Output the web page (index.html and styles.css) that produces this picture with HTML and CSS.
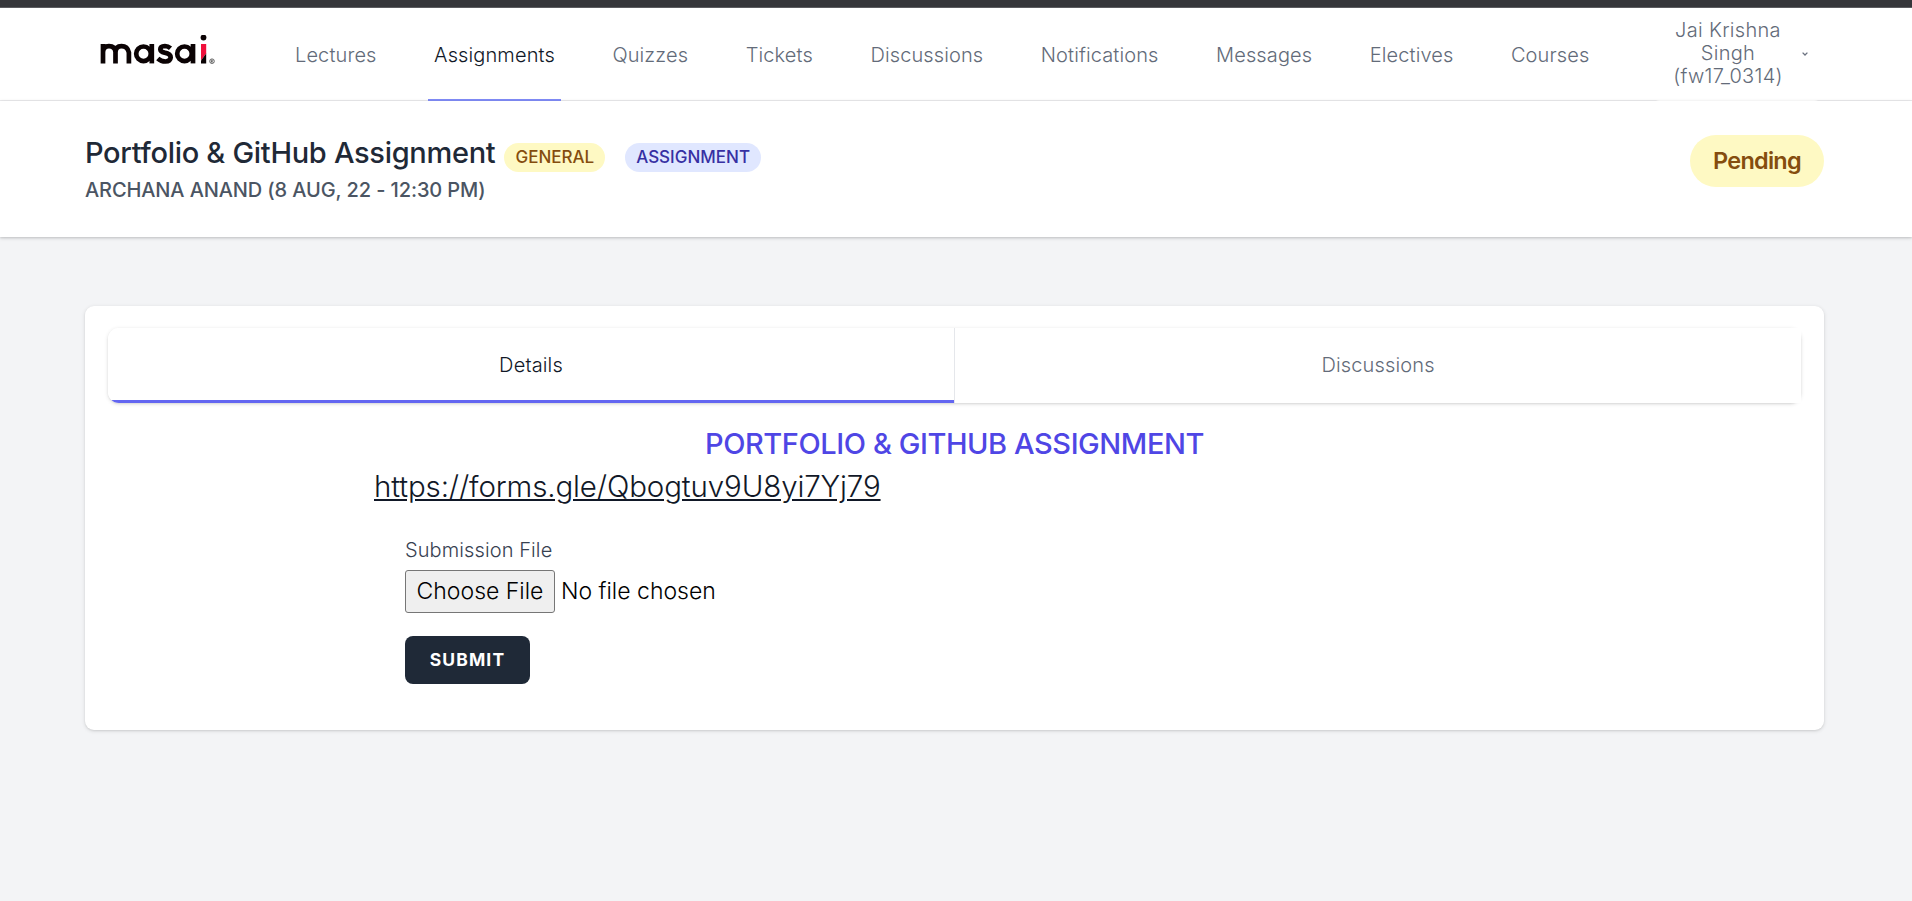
FILE: index.html
```
<!DOCTYPE html>
<html lang="en">
<head>
<meta charset="utf-8">
<title>Portfolio &amp; GitHub Assignment</title>
<link rel="stylesheet" href="styles.css">
</head>
<body>
<div class="topbar"></div>
<nav class="nav">
  <svg class="logo" viewBox="0 0 118 32" role="img" aria-label="masai">
    <g fill="none" stroke="#0b0304" stroke-width="4.7">
      <path d="M3 28.400V9M3 28V17.500Q3 11.200 9 11.200T15.500 17V28.400M15.500 17.500Q15.500 11.200 21.500 11.200T28.900 17.500V28.400"/>
      <circle cx="43.500" cy="18.800" r="7.300"/>
      <path d="M51.800 9V28.400"/>
      <path d="M70.500 13.200Q68 11 65 11Q60.300 11.200 60.300 14.200Q60.500 16.800 64.500 17.600Q70.700 18.600 70.700 22.600Q70.300 26.500 65.500 26.500Q61 26.500 57.800 23.500"/>
      <circle cx="84.500" cy="18.800" r="7.300"/>
      <path d="M93 9V28.400"/>
    </g>
    <circle cx="103.500" cy="2.500" r="2.900" fill="#0b0304"/>
    <path d="M101 9H106.200V18.500L101 25.500Z" fill="#f0103c"/>
    <path d="M106.200 18.500V28.400H101V25.500Z" fill="#0b0304"/>
    <circle cx="112" cy="26.200" r="2.300" fill="none" stroke="#444" stroke-width=".8"/>
    <path d="M111.300 27.700V25H112.300Q113.300 25.800 112.300 26.500H111.300M112.200 26.500L113 27.700" fill="none" stroke="#333" stroke-width=".6"/>
  </svg>
  <div class="links">
    <a>Lectures</a><a class="active">Assignments</a><a>Quizzes</a><a>Tickets</a><a>Discussions</a><a>Notifications</a><a>Messages</a><a>Electives</a><a>Courses</a>
  </div>
  <button class="user"><span>Jai Krishna<br>Singh<br>(fw17_0314)</span>
    <svg class="chevron" viewBox="0 0 6 4"><path d="M.6.6L3 3L5.400.6" fill="none" stroke="#6b7280" stroke-width="1.300"/></svg>
  </button>
</nav>
<header class="heading">
  <div>
    <div class="title-row"><h1>Portfolio &amp; GitHub Assignment</h1><span class="tag yellow">GENERAL</span><span class="tag indigo">ASSIGNMENT</span></div>
    <p class="author">ARCHANA ANAND (8 AUG, 22 - 12:30 PM)</p>
  </div>
  <span class="status">Pending</span>
</header>
<main class="card">
  <div class="tabs"><a class="tab current">Details</a><a class="tab">Discussions</a></div>
  <h2>PORTFOLIO &amp; GITHUB ASSIGNMENT</h2>
  <div class="content"><a class="form-link">https://forms.gle/Qbogtuv9U8yi7Yj79</a></div>
  <form class="form">
    <label class="label">Submission File</label>
    <div class="file"><button type="button" class="choose">Choose File</button><span>No file chosen</span></div>
    <button type="button" class="submit">SUBMIT</button>
  </form>
</main>
</body>
</html>
```
FILE: styles.css
```
* { box-sizing: border-box; }
body { margin: 0; background: #f3f4f6; font-family: Inter, "Liberation Sans", sans-serif; font-weight: 300; color: #111827; height: 901px; overflow: hidden; }
button { font: inherit; letter-spacing: inherit; }
h1, h2, p { margin: 0; }
.topbar { height: 8px; background: #35363a; border-bottom: 1px solid #5b5c60; }
.nav { height: 93px; background: #fff; border-bottom: 1px solid #ececee; display: flex; padding-left: 100px; letter-spacing: .12px; }
.logo { width: 118px; height: 32px; margin-top: 26.500px; flex: none; }
.links { display: flex; gap: 45.500px; margin-left: 71px; height: 93px; flex: none; }
.links a { padding: 0 6px; font-size: 20px; line-height: 94px; height: 93px; color: #636b79; }
.links a.active { color: #111827; border-bottom: 2px solid #818cf8; }
.user { margin-left: auto; margin-right: 90px; width: 170px; height: 93px; flex: none; border: 0; border-radius: 8px; background: #fff; color: #636b79; font-size: 20px; line-height: 23px; padding: 0 14px 2px 20px; display: flex; justify-content: space-between; align-items: center; }
.user span { width: 112px; text-align: center; letter-spacing: .3px; }
.chevron { width: 6px; height: 4px; }
.heading { height: 136px; background: #fff; position: relative; box-shadow: 0 1px 4px rgba(0,0,0,.15), 0 1px 2px rgba(0,0,0,.1); display: flex; justify-content: space-between; padding: 34px 88px 0 85px; }
.title-row { display: flex; align-items: flex-start; }
h1 { font-size: 29px; line-height: 36px; font-weight: 500; color: #1f2937; letter-spacing: -.3px; }
.tag { height: 29px; border-radius: 15px; padding: 0 11px; margin: 8px 0 0 9px; font-size: 17px; line-height: 28px; font-weight: 500; }
.yellow { background: #fef9c3; color: #854d0e; }
.indigo { background: #e0e7ff; color: #3730a3; margin-left: 20px; }
.author { font-size: 20px; line-height: 26px; font-weight: 500; color: #4b5563; margin-top: 5px; letter-spacing: -.11px; }
.status { width: 134px; height: 52px; border-radius: 26px; background: #fef9c3; color: #854d0e; font-size: 23.500px; line-height: 51px; text-align: center; font-weight: 600; letter-spacing: -.75px; }
.card { width: 1739px; height: 424px; margin: 69px 0 0 85px; background: #fff; border-radius: 9px; padding: 22px 23px 0 23px; box-shadow: 0 1px 4px rgba(0,0,0,.12), 0 1px 2px rgba(0,0,0,.07); }
.tabs { display: flex; height: 75px; border-radius: 11px; box-shadow: 0 1px 4px rgba(0,0,0,.12), 0 1px 2px rgba(0,0,0,.08); }
.tab { flex: 1; text-align: center; font-size: 20px; line-height: 75px; color: #636b79; background: #fff; letter-spacing: .15px; }
.current { color: #111827; background: linear-gradient(to top, #6366f1 3px, #fff 3px); border-right: 1px solid #e5e7eb; border-radius: 11px 0 0 11px; }
h2 { margin-top: 22px; text-align: center; color: #4f46e5; font-size: 29px; line-height: 38px; font-weight: 500; letter-spacing: -.43px; }
.content { margin: 4px 0 0 266px; }
.form-link { font-size: 29.500px; line-height: 38px; text-decoration: underline; letter-spacing: -.13px; }
.form { margin: 32px 0 0 297px; }
.label { display: block; font-size: 20px; line-height: 26px; color: #374151; letter-spacing: .1px; }
.file { display: flex; align-items: center; gap: 6px; font-size: 23px; line-height: 28px; color: #000; margin-top: 7px; }
.file span { padding-bottom: 2px; }
.choose { width: 150px; height: 43px; padding: 0 0 2px; background: #efefef; border: 1px solid #767676; border-radius: 3px; color: #000; }
.submit { margin-top: 23px; width: 125px; height: 48px; padding: 0 0 1px; border: 0; border-radius: 8px; background: #1f2937; color: #fff; font-size: 17.500px; font-weight: 700; letter-spacing: 1.100px; }
```
